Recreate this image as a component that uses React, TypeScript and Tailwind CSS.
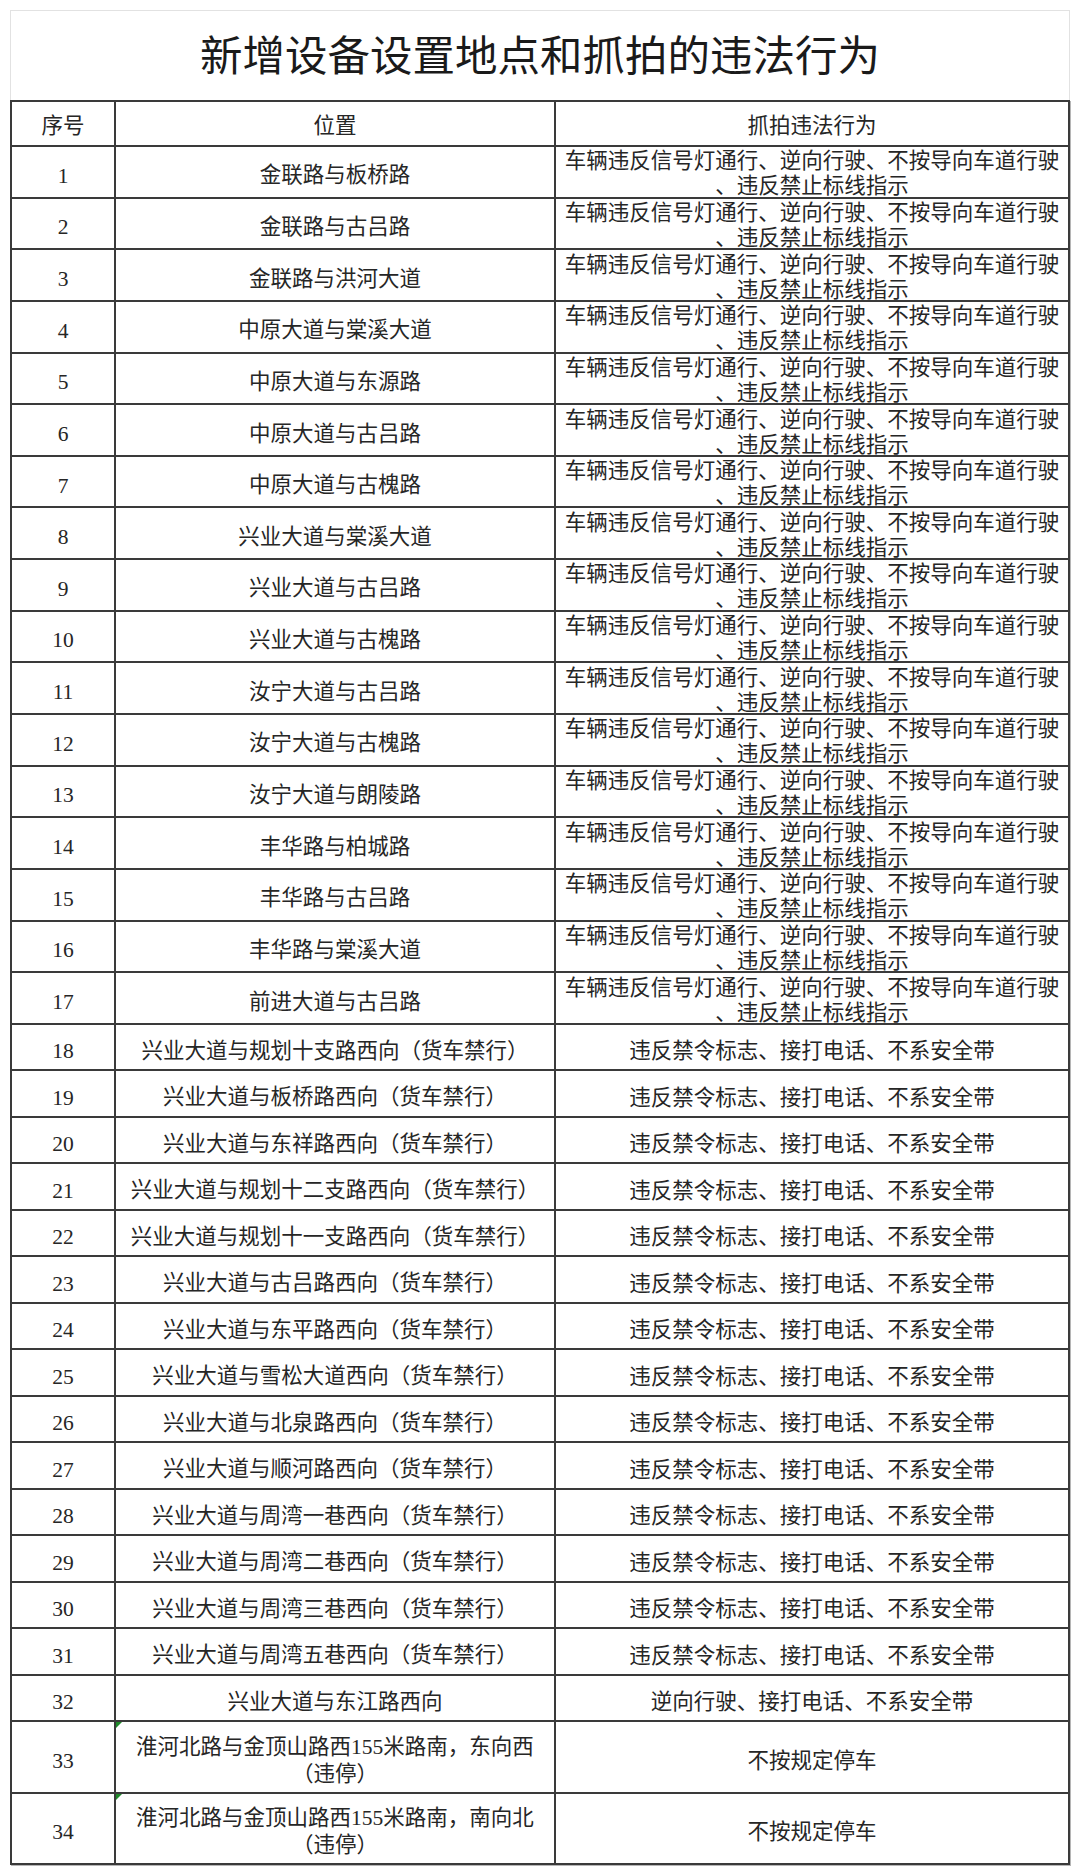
const LONG_1 = "车辆违反信号灯通行、逆向行驶、不按导向车道行驶";
const LONG_2 = "、违反禁止标线指示";
const BAN = "违反禁令标志、接打电话、不系安全带";

type Row = { no: number; place: string[]; act: string[]; h: string; mark?: boolean };

const crossings = [
  "金联路与板桥路",
  "金联路与古吕路",
  "金联路与洪河大道",
  "中原大道与棠溪大道",
  "中原大道与东源路",
  "中原大道与古吕路",
  "中原大道与古槐路",
  "兴业大道与棠溪大道",
  "兴业大道与古吕路",
  "兴业大道与古槐路",
  "汝宁大道与古吕路",
  "汝宁大道与古槐路",
  "汝宁大道与朗陵路",
  "丰华路与柏城路",
  "丰华路与古吕路",
  "丰华路与棠溪大道",
  "前进大道与古吕路",
];

const truckRoads = [
  "兴业大道与规划十支路西向（货车禁行）",
  "兴业大道与板桥路西向（货车禁行）",
  "兴业大道与东祥路西向（货车禁行）",
  "兴业大道与规划十二支路西向（货车禁行）",
  "兴业大道与规划十一支路西向（货车禁行）",
  "兴业大道与古吕路西向（货车禁行）",
  "兴业大道与东平路西向（货车禁行）",
  "兴业大道与雪松大道西向（货车禁行）",
  "兴业大道与北泉路西向（货车禁行）",
  "兴业大道与顺河路西向（货车禁行）",
  "兴业大道与周湾一巷西向（货车禁行）",
  "兴业大道与周湾二巷西向（货车禁行）",
  "兴业大道与周湾三巷西向（货车禁行）",
  "兴业大道与周湾五巷西向（货车禁行）",
];

const rows: Row[] = [
  ...crossings.map((p, i) => ({ no: i + 1, place: [p], act: [LONG_1, LONG_2], h: "h-[51.65px]" })),
  ...truckRoads.map((p, i) => ({ no: i + 18, place: [p], act: [BAN], h: "h-[46.5px]" })),
  { no: 32, place: ["兴业大道与东江路西向"], act: ["逆向行驶、接打电话、不系安全带"], h: "h-[46.5px]" },
  {
    no: 33,
    place: ["淮河北路与金顶山路西155米路南，东向西", "（违停）"],
    act: ["不按规定停车"],
    h: "h-[71.6px]",
    mark: true,
  },
  {
    no: 34,
    place: ["淮河北路与金顶山路西155米路南，南向北", "（违停）"],
    act: ["不按规定停车"],
    h: "h-[70.7px]",
    mark: true,
  },
];

const font = { fontFamily: '"Liberation Serif", "Noto Sans CJK SC", serif' };

function Lines({ lines, lh }: { lines: string[]; lh: string }) {
  return (
    <>
      {lines.map((l) => (
        <span key={l} className={`block whitespace-nowrap ${lh}`}>
          {l}
        </span>
      ))}
    </>
  );
}

export default function App() {
  return (
    <div className="min-h-screen bg-white pt-[10px] text-[#262626]" style={font}>
      {/* title */}
      <div className="ml-[10px] flex h-[90px] w-[1060px] items-center justify-center border-x border-t border-[#e2e2e2] pt-[4px]">
        <h1 className="text-[42.5px] font-normal leading-none text-[#1a1a1a]">新增设备设置地点和抓拍的违法行为</h1>
      </div>

      {/* table */}
      <div className="ml-[10px] w-[1060px] border-l-2 border-t-2 border-[#3a3a3a] text-[21.5px] shadow-[1px_1px_0_#b5b5b5]">
        <div className="flex h-[45px]">
          <div className="flex w-[104px] items-center justify-center border-b-2 border-r-2 border-[#3a3a3a] pt-[6px]">
            序号
          </div>
          <div className="flex w-[440px] items-center justify-center border-b-2 border-r-2 border-[#3a3a3a] pt-[6px]">
            位置
          </div>
          <div className="flex w-[514px] items-center justify-center border-b-2 border-r-2 border-[#3a3a3a] pt-[6px]">
            抓拍违法行为
          </div>
        </div>

        {rows.map((r) => (
          <div key={r.no} className={`flex ${r.h}`}>
            <div className="flex w-[104px] items-center justify-center border-b-2 border-r-2 border-[#3a3a3a] pt-[8px]">
              {r.no}
            </div>
            <div className="relative flex w-[440px] flex-col items-center justify-center overflow-hidden border-b-2 border-r-2 border-[#3a3a3a] pt-[8px] text-center">
              {r.mark && (
                <span className="absolute left-0 top-0 h-0 w-0 border-r-[6px] border-t-[6px] border-r-transparent border-t-[#1f8a2b]" />
              )}
              <Lines lines={r.place} lh="leading-[27px]" />
            </div>
            <div
              className={`flex w-[514px] flex-col items-center justify-center overflow-hidden border-b-2 border-r-2 border-[#3a3a3a] text-center ${
                r.act.length > 1 ? "pt-[5px]" : "pt-[9px]"
              }`}
            >
              <Lines lines={r.act} lh="leading-[25px]" />
            </div>
          </div>
        ))}
      </div>
    </div>
  );
}
